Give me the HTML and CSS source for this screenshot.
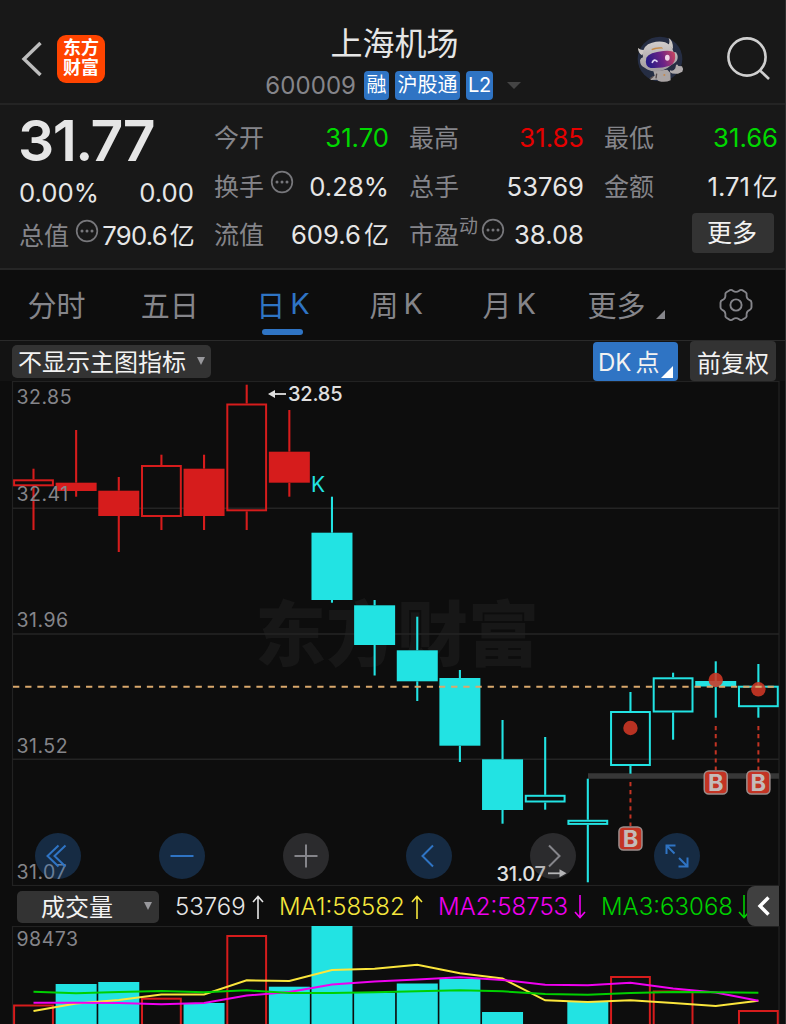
FILE: index.html
```html
<!DOCTYPE html>
<html lang="zh-CN">
<head>
  <meta charset="UTF-8" />
  <meta name="viewport" content="width=device-width, initial-scale=1.0" />
  <title>上海机场 600009</title>
  <link rel="stylesheet" href="styles.css">
</head>
<body>
  <header class="header">
    <div class="header-left">
      <svg class="back" width="22" height="36" viewBox="0 0 22 36"><path d="M19.5 2 L3 18 L19.5 34" /></svg>
      <div class="logo"><span>东方</span><span>财富</span></div>
    </div>
    <div class="header-title">
      <h1>上海机场</h1>
      <div class="sub">
        <span class="code">600009</span>
        <span class="tag">融</span>
        <span class="tag">沪股通</span>
        <span class="tag l2">L2</span>
        <i class="tri-down"></i>
      </div>
    </div>
    <div class="header-right">
      <svg class="robot" width="50" height="50" viewBox="50 40 150 150">
        <defs>
          <linearGradient id="visor" x1="0" y1="0.2" x2="1" y2="0">
            <stop offset="0" stop-color="#2a1c86" />
            <stop offset="0.5" stop-color="#6e2386" />
            <stop offset="1" stop-color="#d0495c" />
          </linearGradient>
          <linearGradient id="shell" x1="0" y1="0" x2="0" y2="1">
            <stop offset="0" stop-color="#d0cccb" />
            <stop offset="1" stop-color="#a09a9d" />
          </linearGradient>
        </defs>
        <circle cx="122" cy="118" r="67" fill="#252d43" />
        <path d="M102 154 L144 150 L153 160 L154 182 Q136 190 118 184 L113 180 L95 181 L91 176 L106 168 Z" fill="#aaa4a4" />
        <path d="M152 152 Q163 156 168 146 L170 136 Q174 132 177 139 L188 140 Q194 148 189 156 L176 162 Q160 164 152 158 Z" fill="#b0abac" />
        <path d="M112 162 L110 176 M102 170 L92 178" stroke="#55494a" stroke-width="4" />
        <circle cx="135" cy="166" r="3" fill="#c68a4c" />
        <path d="M56 85 Q56 100 68 107 L79 90 Q66 94 56 85 Z M148 55 Q162 63 161 88 L147 76 Q153 68 148 55 Z" fill="#cdc8c5" />
        <path d="M70 104 Q71 76 98 69 Q132 60 151 76 Q160 84 163 98 L170 98 Q179 112 172 124 Q166 132 156 136 Q130 160 96 154 Q82 150 76 144 Q62 140 62 122 Q64 114 71 113 Z" fill="url(#shell)" />
        <path d="M96 88 Q108 81 128 83 L131 87 Q112 86 98 92 Z" fill="#c78b48" />
        <path d="M81 114 Q90 98 132 94 Q162 91 167 102 Q171 129 152 138 Q126 147 94 145 Q75 140 81 114 Z" fill="url(#visor)" />
        <path d="M99 128 Q105 116 113 125" fill="none" stroke="#dcd5f4" stroke-width="5" stroke-linecap="round" />
        <ellipse cx="144" cy="114" rx="7" ry="9" fill="#f0d5e8" />
      </svg>
      <svg class="search" width="46" height="46" viewBox="0 0 46 46"><circle cx="21" cy="21" r="18.6" /><path d="M33.5 34 L43 43" /></svg>
    </div>
  </header>

  <section class="quote">
    <div class="col main">
      <strong class="price">31.77</strong>
      <div class="cell"><span class="v">0.00%</span><span class="v">0.00</span></div>
      <div class="cell"><span class="k">总值<svg class="more" viewBox="0 0 24 24"><circle cx="12" cy="12" r="10.3" /><path d="M7 12h.01M12 12h.01M17 12h.01" /></svg></span><span class="v cap">790.6<b>亿</b></span></div>
    </div>
    <div class="col">
      <div class="cell"><span class="k">今开</span><span class="v green">31.70</span></div>
      <div class="cell"><span class="k">换手<svg class="more" viewBox="0 0 24 24"><circle cx="12" cy="12" r="10.3" /><path d="M7 12h.01M12 12h.01M17 12h.01" /></svg></span><span class="v">0.28%</span></div>
      <div class="cell"><span class="k">流值</span><span class="v">609.6<b>亿</b></span></div>
    </div>
    <div class="col">
      <div class="cell"><span class="k">最高</span><span class="v red">31.85</span></div>
      <div class="cell"><span class="k">总手</span><span class="v">53769</span></div>
      <div class="cell"><span class="k">市盈<sup>动</sup><svg class="more tight" viewBox="0 0 24 24"><circle cx="12" cy="12" r="10.3" /><path d="M7 12h.01M12 12h.01M17 12h.01" /></svg></span><span class="v">38.08</span></div>
    </div>
    <div class="col last">
      <div class="cell"><span class="k">最低</span><span class="v green">31.66</span></div>
      <div class="cell"><span class="k">金额</span><span class="v">1.71<b>亿</b></span></div>
      <div class="cell end"><button class="btn-more">更多</button></div>
    </div>
  </section>

  <nav class="tabs">
    <a>分时</a>
    <a>五日</a>
    <a class="active">日<em>K</em></a>
    <a>周<em>K</em></a>
    <a>月<em>K</em></a>
    <a class="more-tab">更多<i class="corner"></i></a>
    <a class="gear">
      <svg width="34" height="34" viewBox="0 0 34 34">
        <path d="M10.8 2.2 Q12.4 1.3 13.9 2.7 Q17 5 20.1 2.7 Q21.6 1.3 23.2 2.2 L26.6 4.2 Q28 5.1 27.6 7.1 Q27.4 10.8 30.8 12.2 Q32.5 12.9 32.5 14.8 V19.2 Q32.5 21.1 30.8 21.8 Q27.4 23.2 27.6 26.9 Q28 28.9 26.6 29.8 L23.2 31.8 Q21.6 32.7 20.1 31.3 Q17 29 13.9 31.3 Q12.4 32.7 10.8 31.8 L7.4 29.8 Q6 28.9 6.4 26.9 Q6.6 23.2 3.2 21.8 Q1.5 21.1 1.5 19.2 V14.8 Q1.5 12.9 3.2 12.2 Q6.6 10.8 6.4 7.1 Q6 5.1 7.4 4.2 Z" />
        <circle cx="17" cy="17" r="5.6" />
      </svg>
    </a>
  </nav>

  <div class="toolbar">
    <button class="select">不显示主图指标<i class="arrow"></i></button>
    <div class="toolbar-right">
      <button class="dk">DK<span>点</span><i class="corner"></i></button>
      <button class="fq">前复权</button>
    </div>
  </div>

  <main class="chart">
    <svg id="kline" width="786" height="505" viewBox="0 381 786 505"></svg>
    <div class="controls">
      <button class="blue"><svg viewBox="0 0 46 46"><path d="M23.5 12.5 L12.5 23 L23.5 33.5 M30.5 12.5 L19.5 23 L30.5 33.5" /></svg></button>
      <button class="blue"><svg viewBox="0 0 46 46"><path d="M11.5 23 H34.5" /></svg></button>
      <button><svg viewBox="0 0 46 46"><path d="M11.5 23 H34.5 M23 11.5 V34.5" /></svg></button>
      <button class="blue"><svg viewBox="0 0 46 46"><path d="M27 12.5 L16.5 23 L27 33.5" /></svg></button>
      <button><svg viewBox="0 0 46 46"><path d="M19 12.5 L29.5 23 L19 33.5" /></svg></button>
      <button class="blue"><svg viewBox="0 0 46 46"><path d="M20.5 20.5 L12.5 12.5 M12.5 21 V12.5 H21.5 M25 25 L33.5 33.5 M33.5 24.5 V33.5 H24.5" /></svg></button>
    </div>
  </main>

  <div class="indicator">
    <button class="select vol">成交量<i class="arrow"></i></button>
    <span class="now">53769<svg viewBox="0 0 12 24"><path d="M6 24V1.5M1 7L6 1.5L11 7" /></svg></span>
    <span class="ma1">MA1:58582<svg viewBox="0 0 12 24"><path d="M6 24V1.5M1 7L6 1.5L11 7" /></svg></span>
    <span class="ma2">MA2:58753<svg viewBox="0 0 12 24"><path d="M6 0V22.5M1 17L6 22.5L11 17" /></svg></span>
    <span class="ma3">MA3:63068<svg viewBox="0 0 12 24"><path d="M6 0V22.5M1 17L6 22.5L11 17" /></svg></span>
    <button class="fold"><svg width="14" height="20" viewBox="0 0 14 20"><path d="M11.5 1.5 L3 10 L11.5 18.5" /></svg></button>
  </div>

  <svg id="volume" width="786" height="98" viewBox="0 926 786 98"></svg>

  <script src="chart.js"></script>
</body>
</html>
```
FILE: styles.css
```css
* { box-sizing: border-box; }
body {
  margin: 0;
  width: 786px;
  height: 1024px;
  overflow: hidden;
  background: #0d0d0d;
  color: #e6e6e6;
  font-family: Inter, "Noto Sans CJK SC", sans-serif;
  border-right: 1px solid #2e2e2e;
}
button { border: 0; padding: 0; margin: 0; font-family: inherit; color: #f2f2f2; background: #333; }
i, em, b { font-style: normal; font-weight: 400; }

/* header */
.header { display: grid; grid-template-columns: 240px 1fr 240px; height: 105px; background: #181818; border-bottom: 2px solid #242424; }
.header-left { display: flex; align-items: center; gap: 14px; padding: 14px 0 0 21px; }
.back { fill: none; stroke: #bdbdbd; stroke-width: 3.4; }
.logo { width: 48px; height: 48px; border-radius: 9px; background: #ff4400; color: #fff; display: flex; flex-direction: column; align-items: center; justify-content: center; font-size: 18px; font-weight: 700; line-height: 20px; padding-bottom: 1px; }
.header-title { display: flex; flex-direction: column; align-items: center; padding-top: 24px; }
.header-title h1 { margin: 0; font-size: 32px; font-weight: 400; line-height: 40px; padding-left: 4px; }
.sub { display: flex; align-items: center; height: 30px; margin-top: 6px; padding-left: 1px; white-space: nowrap; }
.code { color: #85858a; font-size: 24px; letter-spacing: .1px; margin-right: 8px; }
.tag { background: #2f74c4; color: #fff; border-radius: 4px; font-size: 20px; line-height: 28px; height: 29px; padding: 0 2.5px; margin-right: 6px; }
.tag.l2 { padding: 0 2px; margin-right: 14px; letter-spacing: -.4px; }
.tri-down { border: 7px solid transparent; border-top-color: #444; border-bottom: 0; }
.header-right { display: flex; padding: 33px 0 0 91px; }
.search { margin: 3px 0 0 40px; fill: none; stroke: #cfcfcf; stroke-width: 2.6; }

/* quote */
.quote { display: grid; grid-template-columns: 175px 175px 175px 174px; column-gap: 20px; height: 165px; padding: 9px 0 0 19px; background: #181818; border-bottom: 2px solid #262626; }
.cell { display: flex; justify-content: space-between; align-items: center; height: 48.5px; white-space: nowrap; }
.k { display: flex; align-items: center; font-size: 25px; color: #85858a; line-height: 36px; }
.v { font-size: 25.7px; line-height: 36px; }
.v b { font-size: 25px; margin-left: 3px; }
.k sup { align-self: flex-start; font-size: 19px; line-height: 20px; }
.more { width: 24px; height: 24px; margin: -10px 0 0 6px; fill: none; stroke: #77777b; stroke-width: 1.7; }
.more path { stroke-width: 3; stroke-linecap: round; }
.more.tight { margin-left: 3px; }
.price { display: block; height: 54px; font-size: 57px; line-height: 54px; font-weight: 600; letter-spacing: -1.6px; margin-left: -1px; }
.cap { letter-spacing: -.8px; }
.main .cell { height: 37px; }
.main .cell:nth-child(2) { height: 49px; }
.end { justify-content: flex-end; padding-right: 4px; }
.btn-more { width: 82px; height: 40px; border-radius: 4px; font-size: 25px; line-height: 38px; margin-top: -5px; padding-right: 2px; }
.green { color: #00d800; }
.red { color: #e60000; }

/* period tabs */
.tabs { display: grid; grid-template-columns: repeat(6, 113.2px) 1fr; height: 71px; border-bottom: 1px solid #2a2a2a; }
.tabs a { position: relative; display: flex; align-items: center; justify-content: center; color: #85858a; font-size: 29px; padding-bottom: 3px; }
.tabs em { margin-left: 5px; }
.tabs .active { color: #2f74c4; }
.tabs .active::after { content: ""; position: absolute; bottom: 5px; width: 41px; height: 6px; border-radius: 3px; background: #2f74c4; }
.corner { border-style: solid; border-width: 0 0 9px 9px; border-color: transparent transparent #85858a; }
.tabs .corner { margin: 22px 0 0 10px; }
.tabs .more-tab { padding-left: 7px; }
.tabs .gear { padding: 0 0 1px 7px; }
.gear svg { fill: none; stroke: #85858a; stroke-width: 1.9; }

/* toolbar */
.toolbar { display: flex; justify-content: space-between; height: 40px; padding: 1px 9px 0 12px; background: #131313; }
.select { display: flex; align-items: center; justify-content: space-between; height: 33px; border-radius: 5px; font-size: 24px; padding-bottom: 2px; }
.toolbar .select { width: 199px; margin-top: 3px; padding: 0 6px 2px 6px; }
.arrow { border: 4.5px solid transparent; border-top: 8px solid #98989c; border-bottom: 0; }
.toolbar-right { display: flex; gap: 12px; }
.dk { position: relative; width: 85px; height: 39px; border-radius: 4px; background: #2f74c4; font-size: 24px; text-align: left; padding: 0 0 2px 5px; }
.dk span { margin-left: 4px; }
.dk .corner { position: absolute; right: 5px; bottom: 3px; border-width: 0 0 12px 12px; border-bottom-color: #fff; }
.fq { width: 86px; height: 40px; margin-top: -1px; border-radius: 4px; font-size: 24px; }

/* charts */
.chart { position: relative; height: 505px; }
svg { display: block; flex: none; }
.controls { position: absolute; left: 35px; bottom: 7px; display: flex; gap: 77.8px; }
.controls button { width: 46px; height: 46px; border-radius: 50%; background: rgba(100, 100, 105, .35); }
.controls .blue { background: rgba(44, 111, 192, .3); }
.controls svg { fill: none; stroke: #85858a; stroke-width: 2; }
.controls .blue svg { stroke: #2f74c4; }
.axis { font-size: 19.5px; fill: #85858a; letter-spacing: .5px; }
.mark { font-size: 20px; font-weight: 500; fill: #e0e0e0; letter-spacing: -.2px; }
.watermark { font-size: 71px; font-weight: 900; fill: #171717; }
.badge { font-size: 23.5px; font-weight: 700; fill: #c4bbb9; text-anchor: middle; }
.frame { fill: none; stroke: #222; stroke-width: 1.2; }

/* volume header */
.indicator { position: relative; display: flex; align-items: center; height: 40px; padding: 1px 0 0 17px; font-size: 24px; font-weight: 300; white-space: nowrap; overflow: hidden; }
.vol { width: 142px; height: 32px; margin-right: 16px; padding: 0 7px 2px 24px; }
.indicator span { display: flex; align-items: center; }
.indicator span svg { width: 12px; height: 24px; margin-left: 6px; fill: none; stroke: currentColor; stroke-width: 1.6; }
.now { width: 104px; }
.ma1 { width: 159px; color: #f5e63c; }
.ma2 { width: 163px; color: #f000f0; }
.ma3 { color: #00d000; }
.indicator .ma3 svg { margin-left: 5px; }
.fold { position: absolute; right: 6px; top: 0; width: 32px; height: 40px; border-radius: 8px 0 0 8px; background: #404040; padding-left: 10px; }
.fold svg { fill: none; stroke: #fff; stroke-width: 3.4; }
```
FILE: chart.js
```js
const RED = '#d61c1c';
const CYAN = '#22e3e3';
const STEP = 42.64;
const FIRST = 33.5;

// high, body top, body bottom, low, color, hollow
const candles = [
  [468.7, 479.3, 486.3, 530, RED, 1],
  [430, 482.7, 491, 496.7, RED, 0],
  [477, 490.7, 516, 552, RED, 0],
  [454.7, 465, 517, 530, RED, 1],
  [454.7, 468.7, 516, 530, RED, 0],
  [384.7, 403.5, 511.3, 530, RED, 1],
  [410, 451.7, 482.7, 496.7, RED, 0],
  [496.7, 532.7, 600, 602.7, CYAN, 0],
  [600, 605.3, 645, 675.5, CYAN, 0],
  [616.7, 650.3, 681.3, 701, CYAN, 0],
  [670, 678, 745.7, 762, CYAN, 0],
  [720, 759.3, 810, 823.7, CYAN, 0],
  [737, 794.8, 802.5, 809.7, CYAN, 1],
  [778.7, 819.8, 824.9, 882.3, CYAN, 1],
  [692, 711, 766, 773.7, CYAN, 1],
  [672.7, 677.3, 712.5, 739.7, CYAN, 1],
  [661.3, 681, 686.5, 717.7, CYAN, 0],
  [664, 685.7, 707.2, 717.7, CYAN, 1]
];

// bar top, color
const volumes = [
  [1004.5, RED], [984, CYAN], [982, CYAN], [997.7, RED], [1003, CYAN], [935, RED],
  [986.7, CYAN], [926, CYAN], [993, CYAN], [983.5, CYAN], [979, CYAN], [1012, CYAN],
  null, [1001.5, CYAN], [976, RED], [990.5, RED], null, [1010, RED]
];

const ma = {
  '#fbe63c': [1011, 1003.5, 1000, 994.5, 994.5, 980.3, 981, 970, 968.7, 964.7, 973.3, 978.5, 1000.3, 1002, 1000.3, 1003, 1006, 1000.7],
  '#f000f0': [1002.7, 1002.7, 1003, 1004.3, 1003, 995.5, 992, 984.5, 981.5, 979.5, 977.2, 980, 984.7, 985.3, 982.7, 988.5, 992.5, 1000.7],
  '#00d000': [991.7, 993.3, 992, 991, 992.3, 990.3, 993, 993, 992.3, 991.3, 990.2, 991.3, 994, 994.7, 993, 992, 992.3, 992.7]
};

const x = i => FIRST + i * STEP;
const line = (x1, y1, x2, y2, color, w, extra = '') =>
  `<line x1="${x1}" y1="${y1}" x2="${x2}" y2="${y2}" stroke="${color}" stroke-width="${w}" ${extra}/>`;

function box(cx, top, bottom, color, hollow) {
  if (!hollow) return `<rect x="${cx - 20.5}" y="${top}" width="41" height="${bottom - top}" fill="${color}"/>`;
  return `<rect x="${cx - 19.4}" y="${top + 1}" width="38.8" height="${bottom - top - 2}" fill="none" stroke="${color}" stroke-width="2"/>`;
}

function drawKline() {
  let s = '<rect class="frame" x="12.5" y="381.5" width="766.5" height="504"/>';
  s += '<text class="watermark" x="255" y="660">东方财富</text>';
  [508.3, 634, 759.3].forEach(y => s += line(12, y, 779, y, '#242424', 1.5));
  s += line(588, 776, 779, 776, '#373737', 5.5);

  candles.forEach(([high, top, bottom, low, color, hollow], i) => {
    s += line(x(i), high, x(i), top, color, 2.1) + line(x(i), bottom, x(i), low, color, 2.1);
    s += box(x(i), top, bottom, color, hollow);
  });

  // buy signals: dot, dashed leader, badge
  [[14, 728, 782, 826], [16, 680, 726, 770], [17, 689.3, 726, 770]].forEach(([i, dot, from, to]) => {
    s += `<circle cx="${x(i)}" cy="${dot}" r="7.2" fill="#d03826" opacity=".88"/>`;
    s += line(x(i), from, x(i), to, '#c33424', 2, 'stroke-dasharray="4.2 3.9"');
    s += `<rect x="${x(i) - 11.5}" y="${to + 1}" width="23" height="23" rx="4.5" fill="#c33424" stroke="#9c8f8d" stroke-width="1.5"/>`;
    s += `<text class="badge" x="${x(i)}" y="${to + 21}">B</text>`;
  });

  s += line(13, 686.8, 779, 686.8, '#d9a86c', 2, 'stroke-dasharray="6.3 5.87"');

  [['32.85', 403.5], ['32.41', 501], ['31.96', 627], ['31.52', 753], ['31.07', 879]].forEach(([t, y]) => {
    s += `<text class="axis" x="16.5" y="${y}">${t}</text>`;
  });
  s += `<text x="311" y="492" font-size="21" fill="${CYAN}">K</text>`;

  s += line(272, 394, 286, 394, '#e0e0e0', 1.8) + '<path d="M268 394 L275 390 V398 Z" fill="#e0e0e0"/>';
  s += '<text class="mark" x="288" y="401.3">32.85</text>';
  s += '<text class="mark" x="496.5" y="881">31.07</text>';
  s += line(548, 873.3, 562, 873.3, '#e0e0e0', 1.8) + '<path d="M566.5 873.3 L559.5 869.3 V877.3 Z" fill="#e0e0e0"/>';
  document.getElementById('kline').innerHTML = s;
}

function drawVolume() {
  let s = '<rect class="frame" x="12.5" y="926.5" width="766.5" height="120"/>';
  volumes.forEach((v, i) => {
    if (v) s += box(x(i), v[0], 1040, v[1], v[1] === RED);
  });
  for (const color in ma) {
    const pts = ma[color].map((y, i) => `${x(i)},${y}`).join(' ');
    s += `<polyline points="${pts}" fill="none" stroke="${color}" stroke-width="2"/>`;
  }
  s += '<text class="axis" x="16.5" y="946">98473</text>';
  document.getElementById('volume').innerHTML = s;
}

drawKline();
drawVolume();
```
